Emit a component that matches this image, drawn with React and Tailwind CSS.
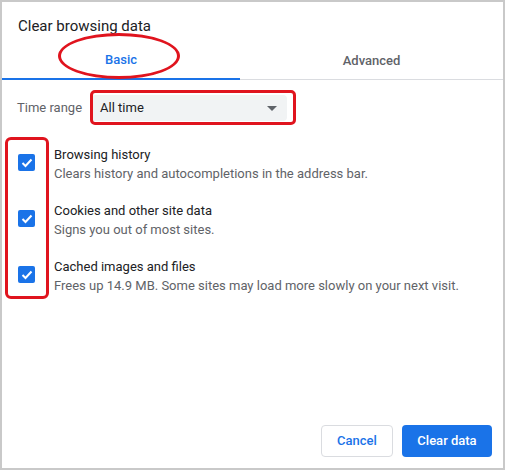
export default function App() {
  const items = [
    ["Browsing history", "Clears history and autocompletions in the address bar."],
    ["Cookies and other site data", "Signs you out of most sites."],
    ["Cached images and files", "Frees up 14.9 MB. Some sites may load more slowly on your next visit."],
  ];
  return (
    <div className="w-[505px] h-[470px] bg-[#c9c9c9] p-[2px]" style={{ fontFamily: "Roboto, 'Liberation Sans', sans-serif" }}>
      <div className="relative w-full h-full bg-white flex flex-col">
        <div className="pl-[16px] pt-[13px] h-[40px] text-[15px] text-[#202124]">Clear browsing data</div>
        <div className="flex h-[38px] border-b border-[#dadce0] text-[13px] font-medium">
          <div className="w-[238px] flex items-center justify-center text-[#1a73e8] border-b-2 border-[#1a73e8] mb-[-1px]">Basic</div>
          <div className="flex-1 flex items-center justify-center text-[#5f6368]">Advanced</div>
        </div>
        <div className="flex items-center mt-[14px] pl-[15px] h-[28px] text-[13px]">
          <span className="text-[#5f6368] mr-[9px]">Time range</span>
          <div className="w-[196px] h-[26px] bg-[#f1f3f4] rounded-[4px] flex items-center justify-between pl-[9px] pr-[10px] text-[#202124]">
            <span>All time</span>
            <svg width="10" height="5" viewBox="0 0 10 5"><path d="M0 0h10L5 5z" fill="#5f6368" /></svg>
          </div>
        </div>
        <div className="flex flex-col mt-[23px] gap-[18px]">
          {items.map(([t, d]) => (
            <div key={t} className="flex pl-[16px] h-[38px]">
              <div className="w-[17px] h-[17px] mt-[9px] rounded-[2px] bg-[#1a73e8] flex items-center justify-center">
                <svg width="12" height="10" viewBox="0 0 12 10"><path d="M1.5 5l3 3 6-6.5" stroke="white" strokeWidth="2" fill="none" /></svg>
              </div>
              <div className="ml-[19px] text-[13px] leading-[19px]">
                <div className="text-[#202124]">{t}</div>
                <div className="text-[#5f6368]">{d}</div>
              </div>
            </div>
          ))}
        </div>
        <div className="flex-1" />
        <div className="flex justify-end gap-[9px] pr-[11px] pb-[11px] text-[13px] font-medium">
          <div className="w-[72px] h-[32px] border border-[#dadce0] rounded-[4px] flex items-center justify-center text-[#1a73e8]">Cancel</div>
          <div className="w-[90px] h-[32px] bg-[#1a73e8] rounded-[4px] flex items-center justify-center text-white">Clear data</div>
        </div>
        <div className="absolute left-[56px] top-[31px] w-[122px] h-[46px] border-[3px] border-[#e0141e] rounded-[50%]" />
        <div className="absolute left-[88px] top-[88px] w-[206px] h-[35px] border-[3px] border-[#e0141e] rounded-[5px]" />
        <div className="absolute left-[3px] top-[135px] w-[44px] h-[162px] border-[3px] border-[#e0141e] rounded-[6px]" />
      </div>
    </div>
  );
}
